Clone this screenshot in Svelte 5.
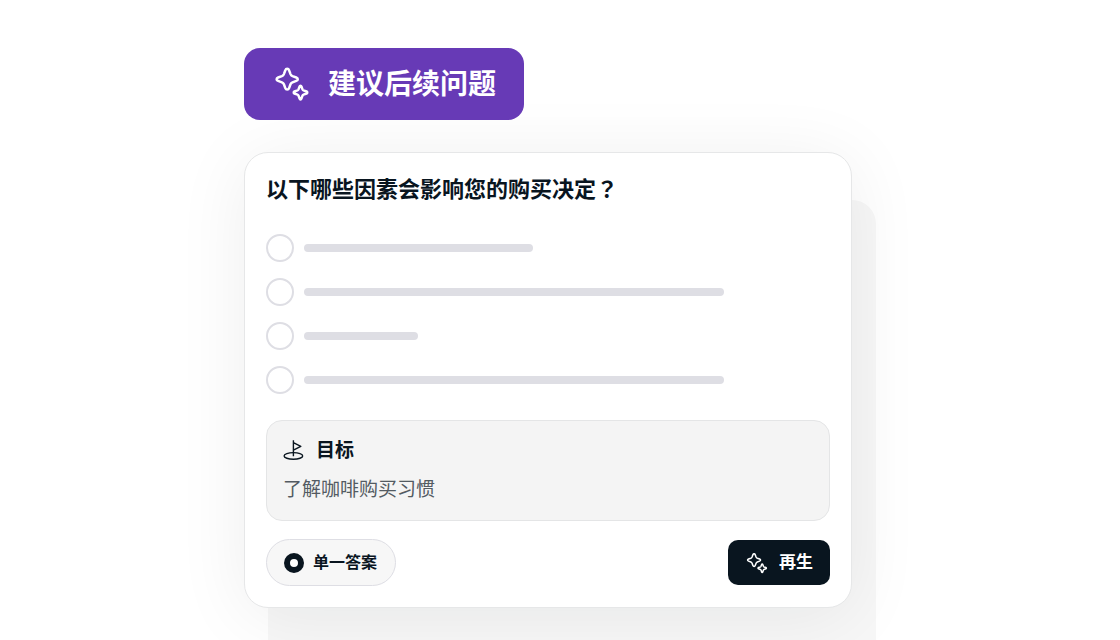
<script lang="ts">
  let selected: string = $state('');

  const options = [
    { id: 'a', width: 229 },
    { id: 'b', width: 420 },
    { id: 'c', width: 114 },
    { id: 'd', width: 420 },
  ];
</script>

{#snippet sparkles(size: number)}
  <svg width={size} height={size} viewBox="0 0 36 36" fill="none" stroke="currentColor" stroke-width="2.5" stroke-linejoin="round" aria-hidden="true">
    <path d="M11.3 4.3C12 2.3 14.4 2.3 15.1 4.3L16.5 8.1C16.9 9.1 17.5 9.7 18.5 10.1L22.3 11.5C24.3 12.2 24.3 14.2 22.3 14.9L18.5 16.3C17.5 16.7 16.9 17.3 16.5 18.3L15.1 22.1C14.4 24.1 12 24.1 11.3 22.1L9.9 18.3C9.5 17.3 8.9 16.7 7.9 16.3L4.1 14.9C2.1 14.2 2.1 12.2 4.1 11.5L7.9 10.1C8.9 9.7 9.5 9.1 9.9 8.1Z" />
    <path d="M25.6 20.3C25.9 19.4 27.1 19.4 27.4 20.3L28.5 23.4C28.7 23.9 29 24.2 29.5 24.4L32.6 25.5C33.5 25.8 33.5 27.2 32.6 27.5L29.5 28.6C29 28.8 28.7 29.1 28.5 29.6L27.4 32.7C27.1 33.6 25.9 33.6 25.6 32.7L24.5 29.6C24.3 29.1 24 28.8 23.5 28.6L20.4 27.5C19.5 27.2 19.5 25.8 20.4 25.5L23.5 24.4C24 24.2 24.3 23.9 24.5 23.4Z" />
  </svg>
{/snippet}

<main class="page">
  <div class="stage">
    <button class="suggest" type="button">
      {@render sparkles(36)}
      <span>建议后续问题</span>
    </button>

    <div class="stack">
      <section class="card">
        <h2 id="question">以下哪些因素会影响您的购买决定<span class="mark">？</span></h2>

        <div class="options" role="radiogroup" aria-labelledby="question">
          {#each options as option, i (option.id)}
            <label class="option">
              <input type="radio" name="answer" value={option.id} bind:group={selected} aria-label={`${i + 1}`} />
              <span class="bar" style="width: {option.width}px"></span>
            </label>
          {/each}
        </div>

        <div class="goal">
          <h3>
            <svg width="21" height="22" viewBox="0 0 21 22" fill="none" stroke="currentColor" stroke-width="1.4" stroke-linejoin="round" aria-hidden="true">
              <ellipse cx="10.4" cy="17.9" rx="9.3" ry="3.3" />
              <path d="M10.4 18.2V2.2M10.4 4.6L17.8 8.4L10.4 12.2" />
            </svg>
            目标
          </h3>
          <p>了解咖啡购买习惯</p>
        </div>

        <div class="footer">
          <button class="type" type="button">
            <span class="dot"></span>
            <span>单一答案</span>
          </button>
          <button class="regenerate" type="button">
            {@render sparkles(22)}
            <span>再生</span>
          </button>
        </div>
      </section>
    </div>
  </div>
</main>

<style>
  :global(body) {
    margin: 0;
    background: #fff;
  }

  .page {
    box-sizing: border-box;
    height: 100vh;
    padding: 48px 24px 0;
    overflow: hidden;
    color: #09151f;
    font-family: 'Noto Sans CJK SC', sans-serif;
  }

  .stage {
    max-width: 632px;
    margin: 0 auto;
  }

  button {
    display: flex;
    align-items: center;
    font-family: inherit;
    font-weight: 700;
    cursor: pointer;
  }

  button > span:last-child {
    padding-bottom: 4px;
  }

  svg {
    display: block;
    flex: none;
  }

  .suggest {
    position: relative;
    z-index: 1;
    gap: 18px;
    height: 72px;
    margin-bottom: 32px;
    padding: 0 28px 0 30px;
    border: none;
    border-radius: 16px;
    background: #673ab6;
    color: #fff;
    font-size: 28px;
    line-height: 40px;
  }

  .stack {
    position: relative;
    padding-right: 24px;
  }

  /* grey sheet behind the card */
  .stack::before {
    content: '';
    position: absolute;
    top: 48px;
    right: 0;
    bottom: -72px;
    left: 24px;
    border-radius: 24px;
    background: #f7f7f7;
  }

  .card {
    position: relative;
    padding: 21px;
    border: 1px solid #e6e7e8;
    border-radius: 24px;
    background: #fff;
    box-shadow: 0 8px 72px rgba(9, 30, 25, 0.07);
  }

  h2 {
    margin: 0 0 34px;
    font-size: 22px;
    line-height: 26px;
  }

  /* full-width mark centred in its cell */
  .mark {
    font-family: 'Noto Sans CJK TC', sans-serif;
  }

  .options {
    display: flex;
    flex-direction: column;
    gap: 16px;
    margin-bottom: 26px;
  }

  .option {
    display: flex;
    align-items: center;
    gap: 10px;
  }

  .option input {
    appearance: none;
    box-sizing: border-box;
    flex: none;
    width: 28px;
    height: 28px;
    margin: 0;
    border: 2px solid #dedee4;
    border-radius: 50%;
    background: #fff;
  }

  .option input:checked {
    border: 8px solid #09151f;
  }

  .bar {
    height: 8px;
    border-radius: 4px;
    background: #dedee4;
  }

  .goal {
    margin-bottom: 18px;
    padding: 15px 16px;
    border: 1px solid #e4e5e6;
    border-radius: 16px;
    background: #f4f4f4;
  }

  h3 {
    display: flex;
    align-items: center;
    gap: 12px;
    margin: 0 0 10px;
    font-size: 19px;
    line-height: 26px;
  }

  .goal p {
    margin: 0;
    padding-bottom: 2px;
    color: #535b62;
    font-size: 19px;
    line-height: 31px;
  }

  .footer {
    display: flex;
    align-items: center;
    justify-content: space-between;
  }

  .type {
    gap: 9px;
    height: 47px;
    padding: 0 18px 0 17px;
    border: 1px solid #dedee4;
    border-radius: 24px;
    background: #f7f7f7;
    color: #09151f;
    font-size: 16px;
  }

  .dot {
    box-sizing: border-box;
    width: 20px;
    height: 20px;
    border: 6px solid #09151f;
    border-radius: 50%;
    background: #fff;
  }

  .regenerate {
    gap: 11px;
    height: 45px;
    padding: 0 17px 0 18px;
    border: none;
    border-radius: 10px;
    background: #09151f;
    color: #fff;
    font-size: 17px;
  }
</style>
